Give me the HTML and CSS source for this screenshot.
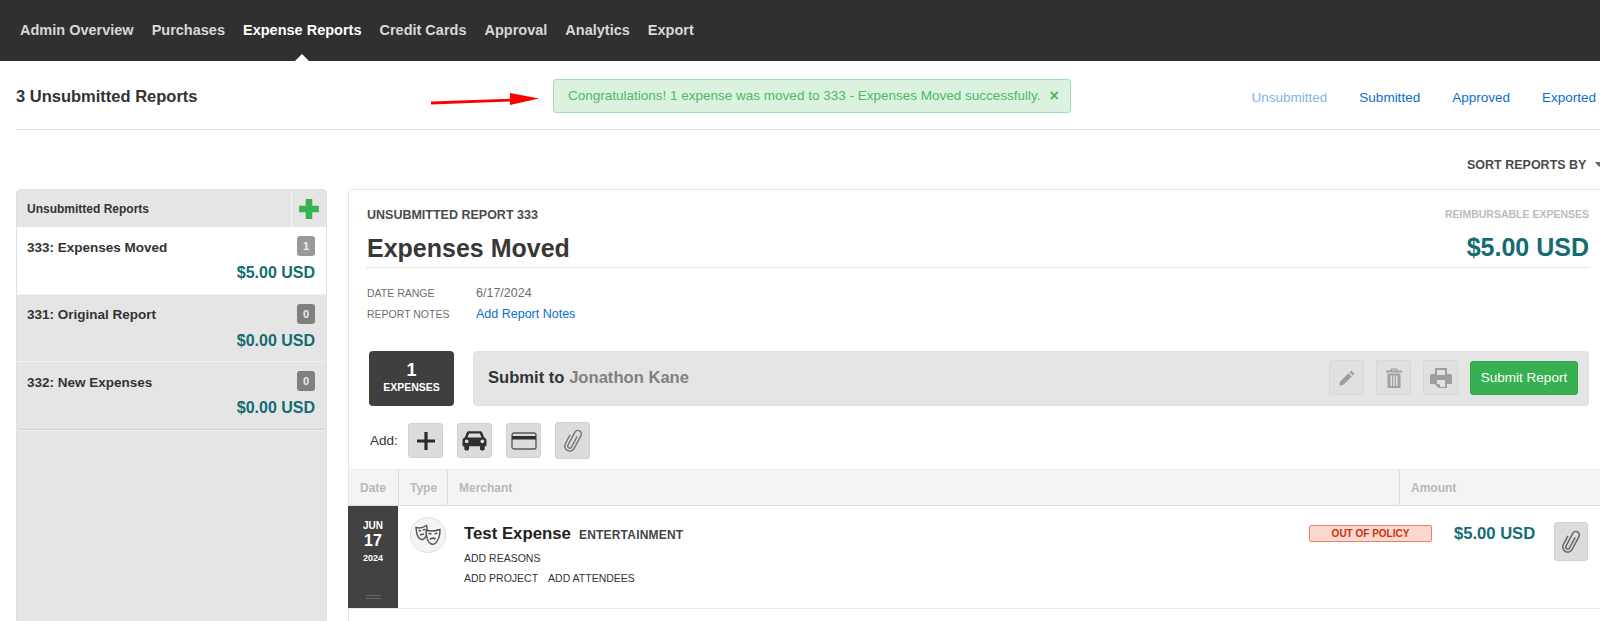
FILE: index.html
```html
<!DOCTYPE html>
<html lang="en">
<head>
<meta charset="utf-8">
<title>Expense Reports</title>
<link rel="stylesheet" href="styles.css">
</head>
<body>
<nav class="topnav">
  <a class="nav-link">Admin Overview</a>
  <a class="nav-link">Purchases</a>
  <a class="nav-link active">Expense Reports</a>
  <a class="nav-link">Credit Cards</a>
  <a class="nav-link">Approval</a>
  <a class="nav-link">Analytics</a>
  <a class="nav-link">Export</a>
</nav>

<header class="pagehead">
  <h1 class="pagetitle">3 Unsubmitted Reports</h1>
  <div class="alert">
    <svg class="arrow" width="112" height="16" viewBox="0 0 112 16"><path d="M0 9.500 L79 6.700 L79 1 L108 6.500 L79 13 L79 9.600 L0 12.500 Z" fill="#f00"/></svg>
    <span>Congratulations! 1 expense was moved to 333 - Expenses Moved successfully.</span>
    <span class="alert-x">×</span>
  </div>
  <div class="tabs">
    <a class="tab dim">Unsubmitted</a>
    <a class="tab">Submitted</a>
    <a class="tab">Approved</a>
    <a class="tab">Exported</a>
  </div>
</header>

<div class="sortrow">SORT REPORTS BY<span class="sortcaret"></span></div>

<div class="columns">
  <aside class="sidebar">
    <div class="side-head">
      <div class="side-title">Unsubmitted Reports</div>
      <div class="side-add">
        <svg width="22" height="22" viewBox="0 0 20 20"><path d="M7 1h6v6h6v6h-6v6H7v-6H1V7h6z" fill="#35b44f"/></svg>
      </div>
    </div>
    <div class="side-item current">
      <div class="side-row"><span class="side-name">333: Expenses Moved</span><span class="count light">1</span></div>
      <div class="side-amt">$5.00 USD</div>
    </div>
    <div class="side-item">
      <div class="side-row"><span class="side-name">331: Original Report</span><span class="count">0</span></div>
      <div class="side-amt">$0.00 USD</div>
    </div>
    <div class="side-item">
      <div class="side-row"><span class="side-name">332: New Expenses</span><span class="count">0</span></div>
      <div class="side-amt">$0.00 USD</div>
    </div>
  </aside>

  <main class="panel">
    <div class="panel-top">
      <div class="report-head">
        <div>
          <div class="eyebrow">UNSUBMITTED REPORT 333</div>
          <h2 class="report-name">Expenses Moved</h2>
        </div>
        <div class="report-total">
          <div class="reimb">REIMBURSABLE EXPENSES</div>
          <div class="total">$5.00 USD</div>
        </div>
      </div>
      <dl class="meta">
        <dt>DATE RANGE</dt><dd>6/17/2024</dd>
        <dt>REPORT NOTES</dt><dd><a class="link">Add Report Notes</a></dd>
      </dl>
      <div class="actions">
        <div class="expcount"><span class="expnum">1</span><span class="explabel">EXPENSES</span></div>
        <div class="submitbar">
          <div class="submit-to">Submit to <span class="approver">Jonathon Kane</span></div>
          <div class="tools">
            <button class="icon-btn faded">
              <svg width="20" height="20" viewBox="0 0 20 20"><path d="M14.200 2.600l3.200 3.200-1.700 1.700-3.200-3.200zM11.500 5.300l3.200 3.200-8.300 8.300-4.200 1 1-4.200z" fill="#9a9da2"/></svg>
            </button>
            <button class="icon-btn faded">
              <svg width="20" height="22" viewBox="0 0 20 22"><path d="M7 1.500h6l1 2h4v2H2v-2h4zM8.200 2.800l-.4.7h4.400l-.4-.7zM3.500 6.500h13V21h-13zM6.500 8.500v10.500h1.500V8.500zM9.300 8.500v10.500h1.500V8.500zM12 8.500v10.500h1.500V8.500z" fill="#a0a2a4" fill-rule="evenodd"/></svg>
            </button>
            <button class="icon-btn faded">
              <svg width="22" height="22" viewBox="0 0 22 22"><path d="M5 1h12v6h3a2 2 0 0 1 2 2v8h-5v4H8.500L5 17.500V17H0V9a2 2 0 0 1 2-2h3zM7 3v5h8V3zM7 13v4.200h3V20h5v-7z" fill="#9c9e9f" fill-rule="evenodd"/></svg>
            </button>
            <button class="submit-btn">Submit Report</button>
          </div>
        </div>
      </div>
      <div class="addrow">
        <span class="addlabel">Add:</span>
        <button class="icon-btn">
          <svg width="20" height="20" viewBox="0 0 20 20"><path d="M8.400 1h3.200v7.400H19v3.200h-7.400V19H8.400v-7.400H1V8.400h7.400z" fill="#2b2b2b"/></svg>
        </button>
        <button class="icon-btn">
          <svg width="25" height="21" viewBox="0 0 24 20"><path d="M6.500 1h11c1 0 1.600.6 2 1.500L21.300 7c1.500.5 2.200 1.500 2.200 3v5.500h-1.700V18a1.500 1.500 0 0 1-1.500 1.500h-1.600a1.500 1.500 0 0 1-1.500-1.500v-2.500H6.800V18a1.500 1.500 0 0 1-1.500 1.500H3.700A1.500 1.500 0 0 1 2.200 18v-2.500H.5V10c0-1.500.7-2.500 2.200-3l1.800-4.500C4.900 1.600 5.500 1 6.500 1zM6.800 3.200L5.300 7h13.400l-1.500-3.800zM4.500 9a1.800 1.800 0 1 0 0 3.600 1.800 1.800 0 0 0 0-3.600zM19.500 9a1.800 1.800 0 1 0 0 3.600 1.800 1.800 0 0 0 0-3.600z" fill="#2f2f2f" fill-rule="evenodd"/></svg>
        </button>
        <button class="icon-btn">
          <svg width="26" height="18" viewBox="0 0 26 18"><rect x="1" y="1" width="24" height="16" rx="2" fill="none" stroke="#555" stroke-width="1.300"/><rect x="1" y="4" width="24" height="3.500" fill="#2f2f2f"/></svg>
        </button>
        <button class="icon-btn tall">
          <svg width="22" height="28" viewBox="0 0 22 28"><path d="M12.500 8V20a2 2 0 0 1-4 0V5.500a3.500 3.500 0 0 1 7 0V20a5 5 0 0 1-10 0V10" fill="none" stroke="#777" stroke-width="1.400" transform="rotate(28 11 14)"/></svg>
        </button>
      </div>
    </div>

    <div class="thead">
      <div class="th col-date">Date</div>
      <div class="th col-type">Type</div>
      <div class="th col-merchant">Merchant</div>
      <div class="th col-amount">Amount</div>
    </div>
    <div class="row">
      <div class="datecell">
        <span class="mon">JUN</span>
        <span class="day">17</span>
        <span class="yr">2024</span>
        <span class="grip"></span>
      </div>
      <div class="typecell">
        <div class="type-icon">
          <svg width="26" height="22" viewBox="0 0 26 22">
            <path d="M1 3.500c3.500 1 7 .3 10.500-2 .8 3 1 7 0 9.500-1.200 3-3.200 4.800-5 4.500C4.500 15 2.800 13 2 10c-.5-2-.9-4.500-1-6.500z" fill="#f4f4f4" stroke="#555" stroke-width="1.400"/>
            <path d="M3.500 6.500l2.500.5M7.700 6l2.300-.7M5 11c1.300-.8 2.600-1 4-.8" stroke="#555" stroke-width="1.500" fill="none"/>
            <path d="M11 6c4 1.500 9 1.200 14-.5 0 3.500-.4 7.200-2 10-1.400 2.800-3.500 5-5.700 4.800-2-.2-4-2.500-5-5.500-.8-2.700-1.300-6-1.300-8.800z" fill="#f4f4f4" stroke="#555" stroke-width="1.400"/>
            <path d="M13.500 9.500l3 .4M19.500 9.800l3-.6M15 15.500c1.600-1.800 4-1.800 5.500-.4" stroke="#555" stroke-width="1.600" fill="none"/>
          </svg>
        </div>
      </div>
      <div class="merchantcell">
        <div class="merchant-line"><span class="merchant">Test Expense</span><span class="category">ENTERTAINMENT</span></div>
        <div class="mini-links"><a class="mini">ADD REASONS</a></div>
        <div class="mini-links"><a class="mini">ADD PROJECT</a><a class="mini">ADD ATTENDEES</a></div>
      </div>
      <div class="policy">OUT OF POLICY</div>
      <div class="amount">$5.00 USD</div>
      <button class="icon-btn clip">
        <svg width="22" height="28" viewBox="0 0 22 28"><path d="M12.500 8V20a2 2 0 0 1-4 0V5.500a3.500 3.500 0 0 1 7 0V20a5 5 0 0 1-10 0V10" fill="none" stroke="#666" stroke-width="1.500" transform="rotate(28 11 14)"/></svg>
      </button>
    </div>
  </main>
</div>
</body>
</html>
```

FILE: styles.css
```css
* { box-sizing: border-box; }
html, body { margin: 0; padding: 0; }
body {
  width: 1600px;
  height: 621px;
  overflow: hidden;
  background: #fff;
  color: #333;
  font-family: "Liberation Sans", Arial, sans-serif;
}
a { text-decoration: none; }
button { font-family: inherit; cursor: pointer; }

.topnav {
  height: 61px;
  background: #303030;
  display: flex;
  align-items: center;
  gap: 18px;
  padding: 0 0 1px 20px;
}
.nav-link {
  position: relative;
  color: #d8d8d8;
  font-size: 14.500px;
  font-weight: 700;
}
.nav-link.active { color: #fff; }
.nav-link.active::after {
  content: "";
  position: absolute;
  left: 50%;
  bottom: -23px;
  margin-left: -7px;
  border: 7px solid transparent;
  border-top: 0;
  border-bottom-color: #fff;
}

.pagehead {
  height: 69px;
  margin-left: 16px;
  border-bottom: 1px solid #e2e2e2;
  display: flex;
  align-items: center;
}
.pagetitle {
  flex: 0 0 537px;
  margin: 0;
  font-size: 16.500px;
  font-weight: 700;
  color: #333;
  padding-top: 3px;
}
.alert {
  position: relative;
  width: 518px;
  height: 34px;
  margin-top: 1px;
  background: #dcf2e0;
  border: 1px solid #a5dcae;
  border-radius: 3px;
  color: #4cb964;
  font-size: 13.500px;
  display: flex;
  align-items: center;
  padding-left: 14px;
  white-space: nowrap;
}
.alert-x { margin-left: 9px; font-size: 16px; font-weight: 700; line-height: 1; }
.arrow { position: absolute; left: -123px; top: 12px; }
.tabs {
  margin-left: auto;
  display: flex;
  gap: 32px;
  padding: 4px 4px 0 0;
  font-size: 13.500px;
}
.tab { color: #0a6fd0; }
.tab.dim { color: #84b4e6; }

.sortrow {
  height: 59px;
  padding: 28px 0 0 1467px;
  font-size: 12.500px;
  font-weight: 700;
  color: #4a4a4a;
  white-space: nowrap;
}
.sortcaret {
  display: inline-block;
  margin-left: 9px;
  vertical-align: 2px;
  border: 4px solid transparent;
  border-top: 5px solid #666;
  border-bottom: 0;
}

.columns {
  display: flex;
  gap: 21px;
  padding-left: 16px;
  height: 440px;
}

.sidebar {
  flex: 0 0 311px;
  height: 440px;
  background: #e5e5e5;
  border: 1px solid #e0e0e0;
  border-radius: 4px 4px 0 0;
}
.side-head {
  height: 37px;
  display: flex;
  align-items: stretch;
}
.side-title {
  flex: 1;
  padding: 12px 0 0 10px;
  font-size: 12px;
  font-weight: 700;
  color: #333;
}
.side-add {
  width: 35px;
  border-left: 1px solid #f4f4f4;
  display: flex;
  align-items: center;
  justify-content: center;
}
.side-item {
  height: 67.500px;
  padding: 9px 11px 0 10px;
  border-bottom: 1px solid #f0f0f0;
}
.side-item:last-child {
  border-bottom: 1px solid #cfcfcf;
  border-radius: 0 0 4px 4px;
  box-shadow: 0 1px 0 #f4f4f4;
}
.side-item.current { background: #fff; }
.side-row {
  display: flex;
  justify-content: space-between;
  align-items: center;
}
.side-name { font-size: 13.500px; font-weight: 700; color: #333; margin-top: 2px; }
.count {
  width: 18px;
  height: 20px;
  border-radius: 3px;
  background: #808080;
  color: #eee;
  font-size: 11px;
  font-weight: 700;
  display: flex;
  align-items: center;
  justify-content: center;
}
.count.light { background: #999; }
.side-amt {
  margin-top: 8px;
  text-align: right;
  font-size: 16px;
  font-weight: 700;
  color: #136c72;
}

.panel {
  flex: 0 0 1260px;
  height: 440px;
  border: 1px solid #e6e6e6;
  border-radius: 4px 4px 0 0;
  background: #fff;
}
.panel-top { padding: 0 21px 0 18px; }
.report-head {
  height: 78px;
  display: flex;
  justify-content: space-between;
  border-bottom: 1px dotted #cfcfcf;
  padding-top: 18px;
}
.eyebrow { font-size: 12.500px; font-weight: 700; color: #4a4a4a; }
.report-name {
  margin: 12px 0 0;
  font-size: 25px;
  font-weight: 700;
  color: #383838;
}
.report-total { text-align: right; }
.reimb { font-size: 10.500px; font-weight: 700; color: #bcbcbc; }
.total {
  margin-top: 13px;
  font-size: 25px;
  font-weight: 700;
  color: #136c72;
}
.meta {
  margin: 18px 0 0;
  display: grid;
  grid-template-columns: 109px 1fr;
  row-gap: 7px;
  line-height: 14px;
}
.meta dt { font-size: 10.500px; color: #6e6e6e; line-height: 14px; }
.meta dd { margin: 0; font-size: 12.500px; color: #6e6e6e; }
.link { color: #0a6fd0; }
.actions {
  margin-top: 30px;
  display: flex;
  gap: 19px;
  padding-left: 2px;
}
.expcount {
  flex: 0 0 85px;
  height: 55px;
  background: #3f3f3f;
  border-radius: 4px;
  color: #fff;
  display: flex;
  flex-direction: column;
  align-items: center;
  justify-content: center;
  padding-bottom: 2px;
}
.expnum { font-size: 18px; font-weight: 700; line-height: 19px; }
.explabel { font-size: 10.500px; font-weight: 700; line-height: 14px; }
.submitbar {
  flex: 0 0 1116px;
  height: 55px;
  background: #e5e5e5;
  border: 1px solid #e0e0e0;
  border-radius: 4px;
  display: flex;
  align-items: center;
  justify-content: space-between;
  padding: 0 10px 2px 14px;
}
.submit-to { font-size: 16.600px; font-weight: 700; color: #333; }
.approver { color: #808080; }
.tools { display: flex; gap: 12px; align-items: center; }
.icon-btn {
  width: 35px;
  height: 35px;
  padding: 0;
  background: #dcdcdc;
  border: 1px solid #d0d0d0;
  border-radius: 3px;
  display: flex;
  align-items: center;
  justify-content: center;
}
.icon-btn.faded { background: #e0e0e0; border-color: #d8d8d8; }
.submit-btn {
  width: 108px;
  height: 34px;
  background: #36b051;
  border: 1px solid #2fa548;
  border-radius: 3px;
  color: #fff;
  font-size: 13.500px;
}
.addrow {
  margin-top: 17px;
  height: 35px;
  display: flex;
  align-items: center;
  gap: 14px;
  padding-left: 3px;
}
.addlabel { font-size: 13.500px; color: #333; width: 25px; margin-right: -1px; }
.icon-btn.tall { height: 37px; }

.thead {
  margin-top: 11px;
  height: 37px;
  background: #f4f4f4;
  border-top: 1px solid #ececec;
  border-bottom: 1px solid #dcdcdc;
  display: flex;
}
.th {
  font-size: 12px;
  font-weight: 700;
  color: #b9b9b9;
  padding: 11px 0 0 11px;
  border-right: 1px solid #dedede;
}
.col-date { flex: 0 0 50px; }
.col-type { flex: 0 0 49px; }
.col-merchant { flex: 0 0 952px; }
.col-amount { flex: 1; border-right: 0; }

.row {
  height: 103px;
  border-bottom: 1px solid #eaeaea;
  display: flex;
}
.datecell {
  flex: 0 0 50px;
  margin-left: -1px;
  background: #424242;
  color: #fff;
  display: flex;
  flex-direction: column;
  align-items: center;
  padding-top: 14px;
  position: relative;
}
.mon { font-size: 10px; font-weight: 700; line-height: 12px; }
.day { font-size: 16px; font-weight: 700; line-height: 18px; }
.yr { font-size: 9px; font-weight: 700; line-height: 17px; }
.grip {
  position: absolute;
  left: 18px;
  bottom: 9px;
  width: 15px;
  height: 4px;
  border-top: 1px solid #666;
  border-bottom: 1px solid #666;
}
.typecell { flex: 0 0 66px; padding: 11px 0 0 12px; }
.type-icon {
  width: 36px;
  height: 36px;
  border-radius: 50%;
  background: #f4f4f4;
  border: 1px solid #dedede;
  display: flex;
  align-items: center;
  justify-content: center;
}
.merchantcell { flex: 0 0 845px; padding-top: 18px; }
.merchant-line { display: flex; align-items: baseline; gap: 8px; }
.merchant { font-size: 16.800px; font-weight: 700; color: #222; }
.category { font-size: 12px; font-weight: 700; color: #444; letter-spacing: .2px; }
.mini-links { display: flex; gap: 10px; margin-top: 7px; line-height: 13px; }
.merchant-line + .mini-links { margin-top: 8px; }
.mini { font-size: 10.500px; color: #333; }
.policy {
  flex: 0 0 123px;
  align-self: flex-start;
  margin-top: 19px;
  height: 17px;
  background: #fdd8ce;
  border: 1px solid #ea8068;
  border-radius: 2px;
  color: #c7320f;
  font-size: 10px;
  font-weight: 700;
  text-align: center;
  line-height: 15px;
}
.amount {
  margin: 18px 0 0 22px;
  font-size: 16.600px;
  font-weight: 700;
  color: #136c72;
  white-space: nowrap;
}
.icon-btn.clip {
  width: 34px;
  height: 39px;
  margin: 16px 0 0 19px;
}
```
